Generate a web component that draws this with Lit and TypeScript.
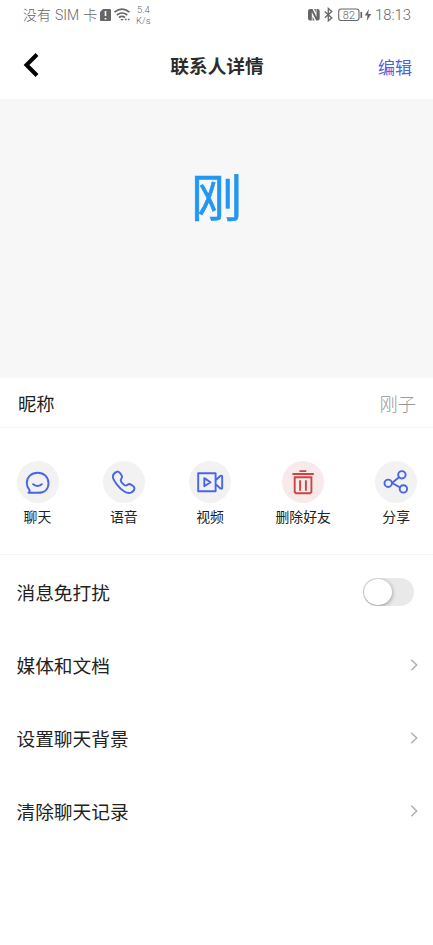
import { LitElement, html, css, svg } from "lit";
import { customElement, state } from "lit/decorators.js";

const actions = [
  { label: "聊天", danger: false, icon: svg`<path d="M12.6 31.8H21C27.5 31.8 31.5 28.1 31.5 22.2C31.5 16 27 11.8 20.7 11.8C14.3 11.8 9.8 16 9.8 22.1C9.8 24.8 10.8 27.2 12.4 29C13 30 12.7 31 11.4 31.8H13M16 23.2C18.2 25.5 22.7 25.5 24.9 23.2"/>` },
  { label: "语音", danger: false, icon: svg`<path d="M13.5 11C11.5 11.8 9.8 14 9.9 16.2C10.3 19.2 15.5 26.7 21.3 30.5C23.7 32 26 32.4 28 31.6C29.8 30.8 31.5 28.6 31.5 26.9C31.2 25.7 28 23.2 26.3 23C24.8 22.9 24.2 24.7 22.6 24.6C20.8 24.4 17.7 20.8 17.7 19.3C17.8 17.7 19.3 17.1 19 15.5C18.6 13.8 16.6 11 15.1 10.6C14.6 10.5 14 10.7 13.5 11Z"/>` },
  { label: "视频", danger: false, icon: svg`<path d="M9.2 12.2H26.6V30.2H9.2ZM15.3 17.1L21.5 21.2L15.3 25.3ZM26.6 19.3L31.5 14.8Q33.2 14.2 33.2 16V26.5Q33.2 28.5 31.5 27.5L26.6 23.1"/>` },
  { label: "删除好友", danger: true, icon: svg`<path stroke-linejoin="miter" stroke-linecap="butt" d="M17.5 10.1H24.3M10.4 13H31.8M12.7 16.3H29.4V31L28.1 32.3H14L12.7 31ZM18.1 19.3V29.7M23.9 19.3V29.7"/>` },
  { label: "分享", danger: false, icon: svg`<circle cx="13.2" cy="22.3" r="3.7"/><circle cx="26.9" cy="13.8" r="3.7"/><circle cx="28.4" cy="27.9" r="3.7"/><path d="M17 22L24 16.3M17 22L25 26.3"/>` },
];

@customElement("app-root")
export class AppRoot extends LitElement {
  @state() private muted = false;

  static styles = css`
    :host {
      display: flex;
      flex-direction: column;
      height: 945px;
      overflow: hidden;
      background: #fff;
      color: #222;
      font-family: "Noto Sans CJK SC", sans-serif;
    }
    svg { display: block; fill: none; flex: none; }
    .status {
      height: 30px;
      display: flex;
      align-items: center;
      padding: 0 21px 0 23px;
      box-sizing: border-box;
      color: #666;
      font-size: 14px;
      line-height: 28px;
      font-weight: 300;
      white-space: nowrap;
    }
    .carrier { width: 76px; font-family: Roboto, "Noto Sans CJK SC", sans-serif; word-spacing: 0.6px; padding-bottom: 1px; }
    .speed {
      font-family: Roboto, sans-serif;
      font-size: 9.5px;
      line-height: 11px;
      text-align: center;
      margin-left: 5px;
    }
    .push { margin-left: auto; }
    .clock {
      font-family: Roboto, sans-serif;
      font-size: 14.8px;
      width: 37px;
    }
    .battery { font-family: Roboto, sans-serif; font-size: 11px; fill: #666; font-weight: 300; }
    header {
      height: 69px;
      flex: none;
      box-sizing: border-box;
      display: grid;
      grid-template-columns: 1fr auto 1fr;
      align-items: center;
      padding: 1px 21px 0 23px;
    }
    h1 { margin: 0; font-size: 18.7px; line-height: 28px; font-weight: 700; color: #2c2c2c; padding-right: 1px; }
    .edit { justify-self: end; font-size: 17px; line-height: 24px; color: #4a63df; padding-top: 4px; }
    .hero {
      height: 279px;
      flex: none;
      box-sizing: border-box;
      padding-top: 56px;
      background: #f7f7f7;
      text-align: center;
      color: #2196f3;
      font-size: 51.5px;
      line-height: 80px;
      -webkit-text-stroke: 0.6px #2196f3;
    }
    .nickname {
      height: 50px;
      box-sizing: border-box;
      border-bottom: 1px solid #f5f5f5;
      display: flex;
      justify-content: space-between;
      align-items: center;
      padding: 0 17px 0 18px;
      font-size: 18.3px;
    }
    .nickname .value { color: #999; font-weight: 300; }
    .actions {
      height: 127px;
      box-sizing: border-box;
      border-bottom: 1px solid #f5f5f5;
      padding: 33px 15.7px 0 16.5px;
      display: flex;
      justify-content: space-between;
    }
    .action {
      display: flex;
      flex-direction: column;
      align-items: center;
      font-size: 13.9px;
      line-height: 20px;
      gap: 3px;
    }
    .disc {
      width: 42px;
      height: 42px;
      border-radius: 50%;
      background: #f2f2f2;
      color: #4a65e8;
    }
    .disc.danger { background: #f8eaea; color: #cc4444; }
    .row {
      height: 73px;
      display: flex;
      justify-content: space-between;
      align-items: center;
      padding: 0 15px 0 16.5px;
      font-size: 18.7px;
    }
    .name { padding-bottom: 1px; }
    .toggle {
      width: 51px;
      height: 28px;
      box-sizing: border-box;
      border-radius: 14px;
      background: #e9e9e9;
      padding: 1px;
      margin-right: 4px;
      overflow: hidden;
      display: flex;
    }
    .toggle.on { background: #4a65e8; justify-content: flex-end; }
    .knob {
      width: 28px;
      height: 26px;
      border-radius: 50%;
      background: #fff;
      box-shadow: 0 1px 4px rgba(0, 0, 0, 0.4);
    }
  `;

  render() {
    return html`
      <div class="status">
        <span class="carrier">没有 SIM 卡</span>
        <svg width="13" height="16" viewBox="0 0 13 16"><path d="M4 2h7q1 0 1 1v10q0 1-1 1H2q-1 0-1-1V5z" fill="#666"/><path d="M6.5 4v5M6.5 11v1.5" stroke="#fff" stroke-width="1.6"/></svg>
        <svg width="19" height="16" viewBox="0 0 19 16" stroke="#666" stroke-width="1.6"><path d="M2.500 5.200Q10-1 17.500 5.200M4.800 8Q10 4 15.300 8M7 10.500Q10 8.200 13 10.500"/><path d="M8.300 12l1.700 1.700 1.700-1.700z" fill="#666" stroke="none"/><path d="M12.800 12.500h1.700M15.800 12.500h1.700"/></svg>
        <span class="speed">5.4<br />K/s</span>
        <svg class="push" width="68" height="16" viewBox="0 0 68 16" stroke="#666" stroke-width="1.300">
          <path d="M3 2h2.500l4 8V2h1q2.200 0 2.200 2v7.500q0 2-2 2H9.200L4.800 5v8.500H3q-2 0-2-2V4q0-2 2-2z" fill="#666" stroke="none"/>
          <path d="M7.100 2h1.700v3.500zM5.600 13.500v-4l2 4z" fill="#666" stroke="none"/>
          <path d="M17.800 4.600l7 6.300-3.500 3V1.500l3.500 3-7 6.300"/>
          <rect x="31.700" y="2" width="20.300" height="11.500" rx="2.500" stroke-width="1.100"/>
          <path d="M54.300 5v6" stroke-width="1.700"/>
          <path d="M61.800 2l-4 6.500h2.700l-.8 5.500 4.500-7h-3z" fill="#666" stroke="none"/>
          <text class="battery" x="41.900" y="11.700" text-anchor="middle" stroke="none">82</text>
        </svg>
        <span class="clock">18:13</span>
      </div>
      <header>
        <svg width="18" height="26" viewBox="0 0 18 26" stroke="#000" stroke-width="4"><path d="M14 2.500L3.500 13 14 23.500"/></svg>
        <h1>联系人详情</h1>
        <span class="edit">编辑</span>
      </header>
      <div class="hero">刚</div>
      <div class="nickname"><span>昵称</span><span class="value">刚子</span></div>
      <div class="actions">
        ${actions.map(
          (a) => html`<div class="action">
            <div class="disc ${a.danger ? "danger" : ""}">
              <svg width="42" height="42" viewBox="0 0 42 42" stroke="currentColor" stroke-width="1.900" stroke-linejoin="round" stroke-linecap="round">${a.icon}</svg>
            </div>
            <span>${a.label}</span>
          </div>`
        )}
      </div>
      <div class="rows">
        <div class="row">
          <span class="name">消息免打扰</span>
          <div class="toggle ${this.muted ? "on" : ""}" @click=${() => (this.muted = !this.muted)}><div class="knob"></div></div>
        </div>
        ${["媒体和文档", "设置聊天背景", "清除聊天记录"].map(
          (t) => html`<div class="row"><span class="name">${t}</span>
            <svg width="8" height="14" viewBox="0 0 8 14" stroke="#b0b0b0" stroke-width="1.500"><path d="M1.300 1.700L6.700 7 1.300 12.300"/></svg>
          </div>`
        )}
      </div>
    `;
  }
}
